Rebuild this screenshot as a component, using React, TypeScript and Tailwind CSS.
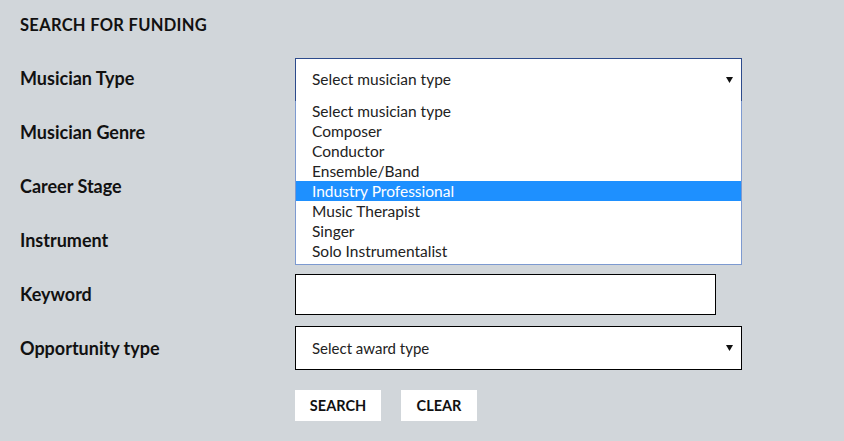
const labels = [
  "Musician Type",
  "Musician Genre",
  "Career Stage",
  "Instrument",
];

const options = [
  "Select musician type",
  "Composer",
  "Conductor",
  "Ensemble/Band",
  "Industry Professional",
  "Music Therapist",
  "Singer",
  "Solo Instrumentalist",
];

function Arrow() {
  return (
    <svg width="7" height="6" viewBox="0 0 7 6" className="shrink-0">
      <path d="M0 0h7L3.5 6z" fill="#111" />
    </svg>
  );
}

export default function App() {
  return (
    <div
      className="min-h-[441px] w-[844px] bg-[#d1d6da] px-5 pt-[15px] text-[#111]"
      style={{ fontFamily: "Lato, 'Open Sans', sans-serif" }}
    >
      <h1 className="text-[16.5px] font-bold tracking-[0.3px] leading-5">
        SEARCH FOR FUNDING
      </h1>

      <div className="mt-[23px] flex flex-col">
        {/* first row carries the open list */}
        <div className="flex h-[54px] items-start">
          <div className="w-[275px] pt-[8px] text-[18px] font-bold leading-6">
            {labels[0]}
          </div>
          <div className="relative">
            <div className="flex h-[44px] w-[447px] items-center justify-between border border-[#2d4b8c] bg-white pl-4 pr-[8px] text-[15.5px] text-[#222]">
              <span>Select musician type</span>
              <Arrow />
            </div>
            <ul className="absolute left-0 top-[43px] z-10 w-[447px] border border-t-0 border-[#7d9ad0] bg-white pb-[3px] text-[15.5px] leading-5 text-[#222]">
              {options.map((o) => (
                <li
                  key={o}
                  className={
                    o === "Industry Professional"
                      ? "bg-[#1e90ff] pl-4 text-white"
                      : "pl-4"
                  }
                >
                  {o}
                </li>
              ))}
            </ul>
          </div>
        </div>

        {labels.slice(1).map((l) => (
          <div key={l} className="flex h-[54px] items-start">
            <div className="w-[275px] pt-[8px] text-[18px] font-bold leading-6">
              {l}
            </div>
          </div>
        ))}

        <div className="flex h-[52px] items-start">
          <div className="w-[275px] pt-[8px] text-[18px] font-bold leading-6">
            Keyword
          </div>
          <input
            type="text"
            className="h-[41px] w-[421px] border border-black bg-white outline-none"
          />
        </div>

        <div className="flex items-start">
          <div className="w-[275px] pt-[10px] text-[18px] font-bold leading-6">
            Opportunity type
          </div>
          <div className="flex h-[44px] w-[447px] items-center justify-between border border-black bg-white pl-4 pr-[8px] text-[15px] text-[#222]">
            <span>Select award type</span>
            <Arrow />
          </div>
        </div>

        <div className="ml-[275px] mt-[20px] flex gap-[20px]">
          <button className="h-[31px] w-[86px] bg-white text-[14.5px] font-bold">
            SEARCH
          </button>
          <button className="h-[31px] w-[76px] bg-white text-[14.5px] font-bold">
            CLEAR
          </button>
        </div>
      </div>
    </div>
  );
}
